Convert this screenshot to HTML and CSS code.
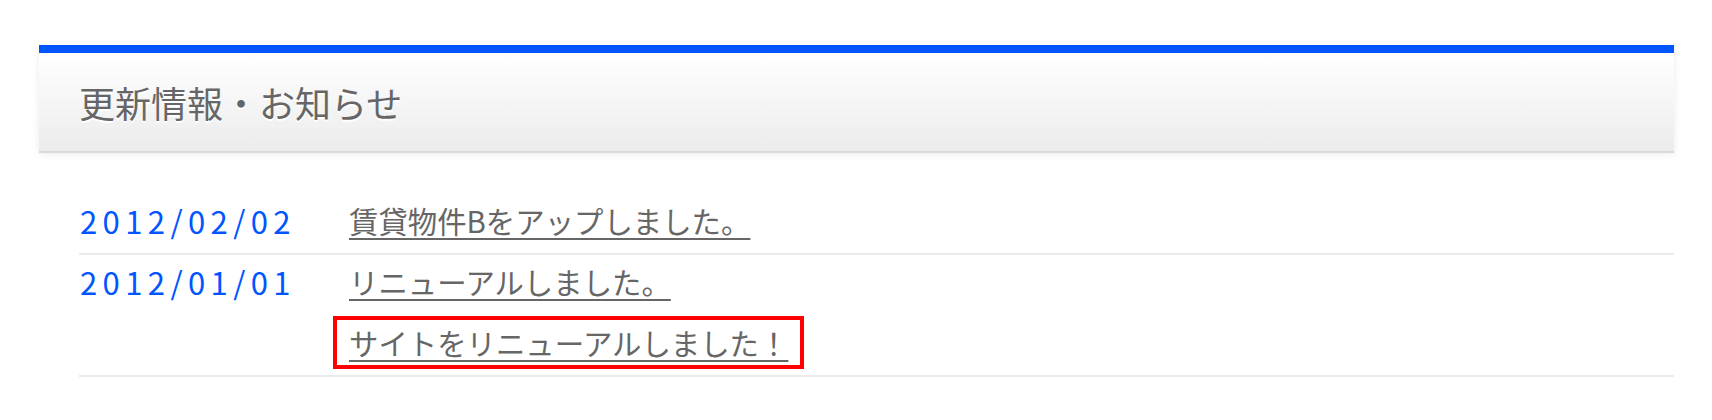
FILE: index.html
```html
<!DOCTYPE html>
<html lang="ja">
<head>
<meta charset="utf-8">
<title>更新情報・お知らせ</title>
<link rel="stylesheet" href="styles.css">
</head>
<body>
<section class="news">
  <h2 class="news-title">更新情報・お知らせ</h2>
  <dl class="news-list">
    <div class="news-row">
      <dt class="news-date">2012/02/02</dt>
      <dd class="news-links">
        <a class="news-link" href="#">賃貸物件Bをアップしました。</a>
      </dd>
    </div>
    <div class="news-row">
      <dt class="news-date">2012/01/01</dt>
      <dd class="news-links">
        <a class="news-link" href="#">リニューアルしました。</a>
        <a class="news-link is-marked" href="#">サイトをリニューアルしました！</a>
      </dd>
    </div>
  </dl>
</section>
</body>
</html>
```

FILE: styles.css
```css
html, body {
  margin: 0;
  padding: 0;
  background: #fff;
}

body {
  font-family: "Noto Sans CJK JP", "Noto Sans", sans-serif;
  color: #666;
}

.news {
  margin: 45px 38px 0 39px;
}

.news-title {
  margin: 0;
  height: 98px;
  display: flex;
  align-items: center;
  padding-left: 40px;
  border-top: 8px solid #0055ff;
  background: linear-gradient(to bottom, #ffffff 0%, #ececec 100%);
  box-shadow: 0 2px 0 #dadada, 0 3px 8px rgba(0, 0, 0, 0.08);
  font-size: 36px;
  font-weight: normal;
  color: #666;
  text-shadow: 0 2px 0 #fff;
}

.news-list {
  margin: 43px 0 0 40px;
  padding: 0;
}

.news-row {
  display: flex;
  padding-bottom: 6px;
  border-bottom: 2px solid #ebebeb;
}

.news-date {
  width: 254px;
  flex: none;
  height: 53px;
  line-height: 53px;
  font-size: 31px;
  letter-spacing: 5.4px;
  color: #0055ff;
  padding-left: 1px;
  box-sizing: border-box;
}

.news-links {
  margin: 0;
  display: flex;
  flex-direction: column;
  align-items: flex-start;
  gap: 8px;
}

.news-link {
  display: block;
  height: 45px;
  line-height: 45px;
  padding: 0 12px;
  border: 4px solid transparent;
  font-size: 29.4px;
  color: #666;
  text-decoration: underline;
  text-decoration-thickness: 2px;
  text-underline-offset: 5px;
}

.news-link.is-marked {
  border-color: #ff0000;
}
```
